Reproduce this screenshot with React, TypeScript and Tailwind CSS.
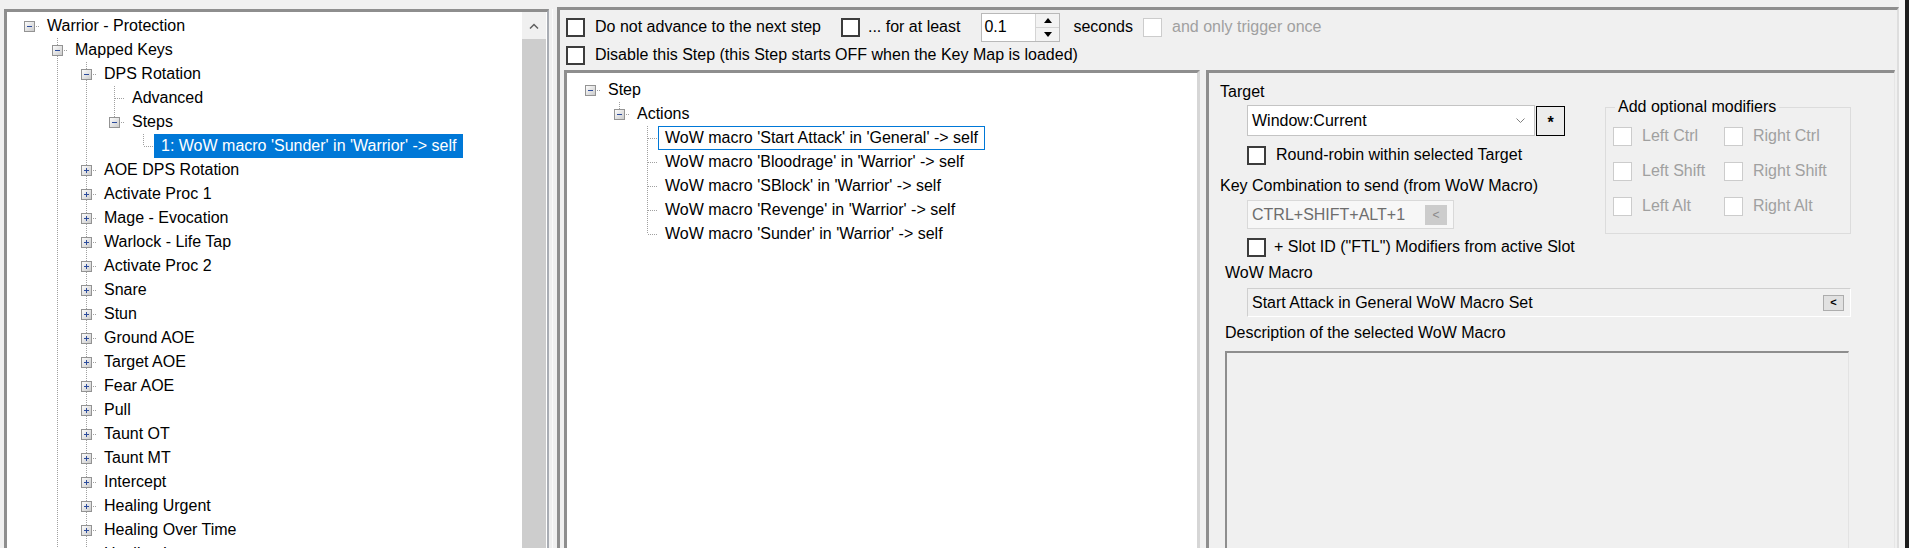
import clsx from "clsx";

type Row = {
  label: string;
  level: number;
  kids?: "open" | "closed";
  mark?: "sel" | "focus";
};

const IND = 28.6;

const r = (label: string, level: number, kids?: "open" | "closed", mark?: "sel" | "focus"): Row => ({
  label,
  level,
  kids,
  mark,
});

const leftRows: Row[] = [
  r("Warrior - Protection", 0, "open"),
  r("Mapped Keys", 1, "open"),
  r("DPS Rotation", 2, "open"),
  r("Advanced", 3),
  r("Steps", 3, "open"),
  r("1: WoW macro 'Sunder' in 'Warrior' -> self", 4, undefined, "sel"),
  r("AOE DPS Rotation", 2, "closed"),
  r("Activate Proc 1", 2, "closed"),
  r("Mage - Evocation", 2, "closed"),
  r("Warlock - Life Tap", 2, "closed"),
  r("Activate Proc 2", 2, "closed"),
  r("Snare", 2, "closed"),
  r("Stun", 2, "closed"),
  r("Ground AOE", 2, "closed"),
  r("Target AOE", 2, "closed"),
  r("Fear AOE", 2, "closed"),
  r("Pull", 2, "closed"),
  r("Taunt OT", 2, "closed"),
  r("Taunt MT", 2, "closed"),
  r("Intercept", 2, "closed"),
  r("Healing Urgent", 2, "closed"),
  r("Healing Over Time", 2, "closed"),
  r("Healing Instant", 2, "closed"),
  r("Interrupt", 2, "closed"),
  r("Key Map Settings", 1, "closed"),
];

const midRows: Row[] = [
  r("Step", 0, "open"),
  r("Actions", 1, "open"),
  r("WoW macro 'Start Attack' in 'General' -> self", 2, undefined, "focus"),
  r("WoW macro 'Bloodrage' in 'Warrior' -> self", 2),
  r("WoW macro 'SBlock' in 'Warrior' -> self", 2),
  r("WoW macro 'Revenge' in 'Warrior' -> self", 2),
  r("WoW macro 'Sunder' in 'Warrior' -> self", 2),
];

// does the node at level k (ancestor of row i, or row i itself) have a later sibling
const hasNext = (rows: Row[], i: number, k: number) => {
  for (let j = i + 1; j < rows.length; j++) {
    if (rows[j].level < k) return false;
    if (rows[j].level === k) return true;
  }
  return false;
};

const TreeRow = ({ rows, i, base }: { rows: Row[]; i: number; base: number }) => {
  const row = rows[i];
  const x = (k: number) => Math.round(base + IND * k);
  const cx = x(row.level);
  const w = cx + 11;
  const dot = { stroke: "#a0a0a0", strokeWidth: 1, strokeDasharray: "1 1" };

  return (
    <div className="flex h-[24px] items-center whitespace-nowrap">
      <svg width={w} height={24} className="shrink-0">
        <defs>
          <linearGradient id="tvbox" x1="0" y1="0" x2="1" y2="1">
            <stop offset="0" stopColor="#ffffff" />
            <stop offset="1" stopColor="#c9c9c9" />
          </linearGradient>
        </defs>
        {Array.from({ length: row.level }, (_, k) =>
          hasNext(rows, i, k) ? (
            <line key={k} x1={x(k) + 0.5} y1={0} x2={x(k) + 0.5} y2={24} {...dot} />
          ) : null,
        )}
        {i > 0 && <line x1={cx + 0.5} y1={0} x2={cx + 0.5} y2={12} {...dot} />}
        {hasNext(rows, i, row.level) && (
          <line x1={cx + 0.5} y1={12} x2={cx + 0.5} y2={24} {...dot} />
        )}
        <line x1={cx + 1} y1={12.5} x2={w} y2={12.5} {...dot} />
        {row.kids && (
          <g>
            <rect x={cx - 4.5} y={7.5} width={10} height={10} fill="url(#tvbox)" stroke="#939393" />
            <line x1={cx - 2} y1={12.5} x2={cx + 3} y2={12.5} stroke="#2d4c9c" />
            {row.kids === "closed" && (
              <line x1={cx + 0.5} y1={10} x2={cx + 0.5} y2={15} stroke="#2d4c9c" />
            )}
          </g>
        )}
      </svg>
      <span
        className={clsx(
          "flex h-[24px] items-center",
          row.mark === "sel" && "bg-[#0078d7] px-[7px] text-white",
          row.mark === "focus" && "border border-[#0078d7] px-[6px]",
          !row.mark && "px-[7px]",
        )}
      >
        {row.label}
      </span>
    </div>
  );
};

const Check = ({ disabled }: { disabled?: boolean }) => (
  <span
    className={clsx(
      "block h-[19px] w-[19px] shrink-0 bg-white",
      disabled ? "border border-[#cccccc]" : "border-2 border-[#3c3c3c]",
    )}
  />
);

const Spinner = () => (
  <div className="ml-[21px] flex h-[29px] w-[79px] items-center border border-[#b9b9b9] bg-white">
    <span className="flex-1 pl-[2px]">0.1</span>
    <div className="flex h-full w-[24px] flex-col border-l border-[#d4d4d4]">
      <div className="flex flex-1 items-center justify-center border-b border-[#d4d4d4] bg-[#f3f3f3]">
        <svg width="8" height="5">
          <polygon points="0,5 4,0 8,5" fill="#000" />
        </svg>
      </div>
      <div className="flex flex-1 items-center justify-center bg-[#f3f3f3]">
        <svg width="8" height="5">
          <polygon points="0,0 8,0 4,5" fill="#000" />
        </svg>
      </div>
    </div>
  </div>
);

const Mod = ({ label }: { label: string }) => (
  <div className="flex h-[22px] items-center">
    <Check disabled />
    <span className="ml-[10px] text-[#a0a0a0]">{label}</span>
  </div>
);

export default function App() {
  return (
    <div className="flex h-[548px] w-[1909px] overflow-hidden bg-[#f0f0f0] font-['Liberation_Sans',Arial,sans-serif] text-black">
      {/* key map tree */}
      <div className="ml-[4px] mt-[9px] flex h-[560px] w-[545px] shrink-0 border-t-[3px] border-r-2 border-l-[3px] border-t-[#8e8e8e] border-r-[#a9adb4] border-l-[#8e8e8e] bg-white">
        <div className="flex-1 overflow-hidden pt-[2px] text-[16px]">
          {leftRows.map((_, i) => (
            <TreeRow key={i} rows={leftRows} i={i} base={21.5} />
          ))}
        </div>
        <div className="flex w-[24px] shrink-0 flex-col">
          <div className="flex h-[27px] items-center justify-center bg-[#f0f0f0]">
            <svg width="10" height="6">
              <polyline points="1,5.5 5,1.5 9,5.5" fill="none" stroke="#606060" strokeWidth="1.5" />
            </svg>
          </div>
          <div className="flex-1 bg-[#cdcdcd]" />
        </div>
        <div className="w-[1px] bg-white" />
      </div>

      {/* splitter */}
      <div className="w-[8px] shrink-0 pl-[3px]">
        <div className="mt-[9px] h-full w-[1px] bg-[#fafafa]" />
      </div>

      {/* step editor */}
      <div className="mt-[7px] flex h-[560px] w-[1342px] shrink-0 flex-col border-t-[3px] border-r-2 border-l-[3px] border-t-[#8e8e8e] border-r-[#dedede] border-l-[#8e8e8e] text-[16px]">
        <div className="mt-[2px] flex h-[30px] items-center whitespace-nowrap pl-[6px]">
          <Check />
          <span className="ml-[10px]">Do not advance to the next step</span>
          <span className="ml-[20px]">
            <Check />
          </span>
          <span className="ml-[8px]">... for at least</span>
          <Spinner />
          <span className="ml-[13px]">seconds</span>
          <span className="ml-[10px]">
            <Check disabled />
          </span>
          <span className="ml-[10px] text-[#a0a0a0]">and only trigger once</span>
        </div>
        <div className="flex h-[26px] items-center whitespace-nowrap pl-[6px]">
          <Check />
          <span className="ml-[10px]">
            Disable this Step (this Step starts OFF when the Key Map is loaded)
          </span>
        </div>

        <div className="mt-[2px] flex min-h-0 flex-1">
          {/* actions tree */}
          <div className="ml-[4px] w-[636px] shrink-0 border-t-[3px] border-r-[3px] border-l-[3px] border-t-[#8e8e8e] border-r-[#d6d6d6] border-l-[#8e8e8e] bg-white pt-[5px] text-[16px]">
            {midRows.map((_, i) => (
              <TreeRow key={i} rows={midRows} i={i} base={23} />
            ))}
          </div>

          {/* action properties */}
          <div className="ml-[6px] flex w-[689px] shrink-0 flex-col border-t-[3px] border-r border-l-[3px] border-t-[#8e8e8e] border-r-[#e6e6e6] border-l-[#8e8e8e] bg-[#f0f0f0] whitespace-nowrap">
            <div className="flex">
              <div className="w-[396px] shrink-0 pl-[11px]">
                <div className="mt-[9px] h-[20px] leading-[20px]">Target</div>
                <div className="mt-[3px] flex items-center pl-[27px]">
                  <div className="flex h-[31px] w-[288px] items-center justify-between border border-[#c4c4c4] bg-white pr-[9px] pl-[4px]">
                    <span>Window:Current</span>
                    <svg width="9" height="5">
                      <polyline points="0.5,0.5 4.5,4.5 8.5,0.5" fill="none" stroke="#808080" />
                    </svg>
                  </div>
                  <div className="ml-[1px] flex h-[30px] w-[29px] items-center justify-center border border-black bg-[#ececec] pt-[4px] font-bold">
                    *
                  </div>
                </div>
                <div className="mt-[8px] flex h-[22px] items-center pl-[27px]">
                  <Check />
                  <span className="ml-[10px]">Round-robin within selected Target</span>
                </div>
                <div className="mt-[10px] h-[20px] leading-[20px]">
                  Key Combination to send (from WoW Macro)
                </div>
                <div className="mt-[4px] ml-[27px] flex h-[29px] w-[207px] items-center border border-[#d9d9d9] bg-[#f7f7f7] pl-[4px] text-[#6d6d6d]">
                  <span>CTRL+SHIFT+ALT+1</span>
                  <span className="mr-[6px] ml-auto flex h-[20px] w-[22px] items-center justify-center bg-[#cccccc] text-[12px] text-[#8a8a8a]">
                    &lt;
                  </span>
                </div>
                <div className="mt-[7px] flex h-[22px] items-center pl-[27px]">
                  <Check />
                  <span className="ml-[8px]">+ Slot ID ("FTL") Modifiers from active Slot</span>
                </div>
              </div>

              <fieldset className="mt-[24px] w-[246px] self-start border border-[#dcdcdc] px-[7px] pb-[16px]">
                <legend className="ml-[2px] h-[20px] px-[3px] leading-[20px]">Add optional modifiers</legend>
                <div className="mt-[8px] grid grid-cols-[111px_1fr] gap-y-[13px]">
                  <Mod label="Left Ctrl" />
                  <Mod label="Right Ctrl" />
                  <Mod label="Left Shift" />
                  <Mod label="Right Shift" />
                  <Mod label="Left Alt" />
                  <Mod label="Right Alt" />
                </div>
              </fieldset>
            </div>

            <div className="flex min-h-0 flex-1 flex-col pl-[16px]">
              <div className="mt-[5px] h-[20px] leading-[20px]">WoW Macro</div>
              <div className="mt-[5px] ml-[22px] flex h-[29px] w-[604px] items-center border-t border-r border-b border-l border-t-[#cfcfcf] border-r-white border-b-white border-l-[#cfcfcf] bg-[#f0f0f0] pl-[4px]">
                <span>Start Attack in General WoW Macro Set</span>
                <span className="mr-[6px] ml-auto flex h-[16px] w-[21px] items-center justify-center border border-[#adadad] bg-[#e1e1e1] text-[11px] font-bold">
                  &lt;
                </span>
              </div>
              <div className="mt-[6px] h-[20px] leading-[20px]">Description of the selected WoW Macro</div>
              <div className="mt-[8px] w-[624px] flex-1 border-t-2 border-r border-l-2 border-t-[#8e8e8e] border-r-[#e3e3e3] border-l-[#8e8e8e] bg-[#f0f0f0]" />
            </div>
          </div>
        </div>
      </div>

      {/* window edge */}
      <div className="w-[6px] shrink-0 bg-[#f7f7f7]" />
      <div className="w-[4px] shrink-0 bg-[#1e1e1e]" />
    </div>
  );
}
